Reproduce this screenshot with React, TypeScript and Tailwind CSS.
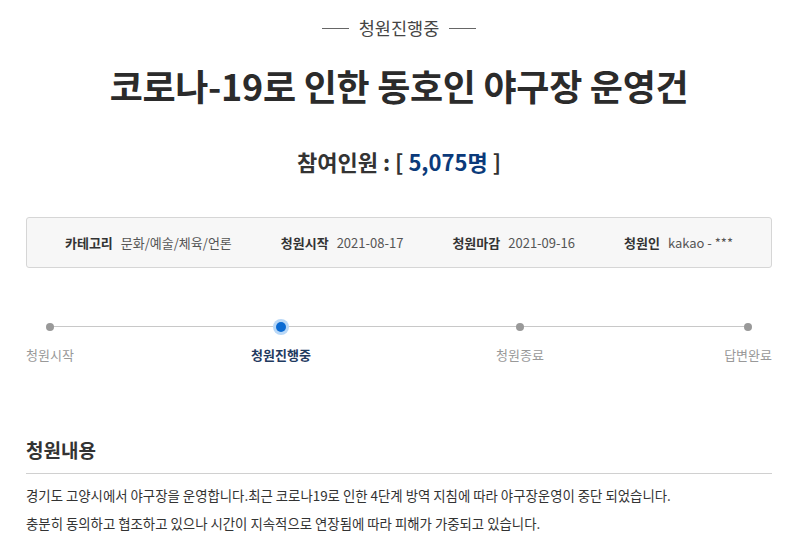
import React from 'react'

const font = { fontFamily: '"Noto Sans CJK KR", "Noto Sans", sans-serif' }

const steps = [
  { label: '청원시작', active: false, shift: '' },
  { label: '청원진행중', active: true, shift: '-ml-[3px]' },
  { label: '청원종료', active: false, shift: 'ml-[5px]' },
  { label: '답변완료', active: false, shift: '' },
]

const info = [
  { label: '카테고리', value: '문화/예술/체육/언론' },
  { label: '청원시작', value: '2021-08-17' },
  { label: '청원마감', value: '2021-09-16' },
  { label: '청원인', value: 'kakao - ***' },
]

export default function App() {
  return (
    <div className="w-[798px] h-[539px] overflow-hidden bg-white text-[#333]" style={font}>
      <div className="px-[26px]">
        {/* status */}
        <div className="flex items-center justify-center gap-[10px] pt-[14px] h-[42px]">
          <span className="w-[27px] h-px bg-[#666]" />
          <span className="text-[17.5px] leading-[26px] text-[#444]">청원진행중</span>
          <span className="w-[27px] h-px bg-[#666]" />
        </div>

        {/* title */}
        <h1 className="mt-[19px] text-center text-[36px] leading-[48px] font-bold tracking-[-0.3px] text-[#2b2b2b]">
          코로나-19로 인한 동호인 야구장 운영건
        </h1>

        {/* count */}
        <div className="mt-[36px] text-center text-[22px] leading-[32px] font-bold text-[#333]">
          참여인원 : [ <span className="text-[#0b3a7a]">5,075명</span> ]
        </div>

        {/* info box */}
        <div className="mt-[40px] h-[51px] rounded-[3px] border border-[#d6d6d6] bg-[#f7f7f7] flex items-center justify-center gap-[49px]">
          {info.map((it) => (
            <div key={it.label} className="flex items-center gap-[8px] text-[13px]">
              <span className="font-bold text-[#333]">{it.label}</span>
              <span className="text-[#555]">{it.value}</span>
            </div>
          ))}
        </div>

        {/* progress */}
        <div className="relative mt-[49px] flex justify-between">
          <div className="absolute left-[24px] right-[24px] top-[9px] h-px bg-[#c8c8c8]" />
          {steps.map((s) => (
            <div key={s.label} className={`relative flex flex-col items-center ${s.shift}`}>
              <div className="h-[20px] flex items-center justify-center">
                {s.active ? (
                  <span className="w-[10px] h-[10px] rounded-full bg-[#0b6bd3] ring-[3px] ring-[#b9d8f7]" />
                ) : (
                  <span className="w-[8px] h-[8px] rounded-full bg-[#999]" />
                )}
              </div>
              <span
                className={
                  s.active
                    ? 'mt-[8px] text-[13px] leading-[20px] font-bold text-[#1f3a5f]'
                    : 'mt-[8px] text-[13px] leading-[20px] text-[#999]'
                }
              >
                {s.label}
              </span>
            </div>
          ))}
        </div>

        {/* content */}
        <h2 className="mt-[71px] text-[19px] leading-[28px] font-bold text-[#333]">청원내용</h2>
        <div className="mt-[9px] h-px bg-[#d0d0d0]" />
        <div className="mt-[7px] text-[13.4px] leading-[28px] text-[#333]">
          <p>경기도 고양시에서 야구장을 운영합니다.최근 코로나19로 인한 4단계 방역 지침에 따라 야구장운영이 중단 되었습니다.</p>
          <p>충분히 동의하고 협조하고 있으나 시간이 지속적으로 연장됨에 따라 피해가 가중되고 있습니다.</p>
        </div>
      </div>
    </div>
  )
}
